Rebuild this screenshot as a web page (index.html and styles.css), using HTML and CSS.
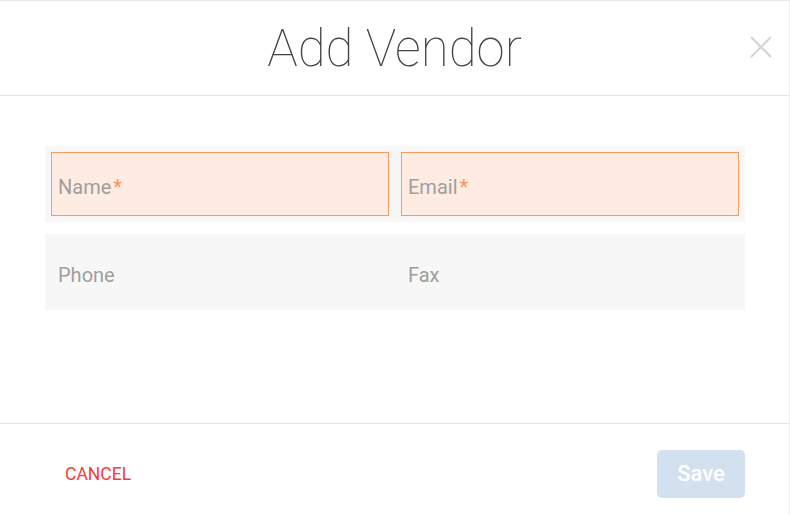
FILE: index.html
```html
<!DOCTYPE html>
<html lang="en">
<head>
  <meta charset="UTF-8">
  <meta name="viewport" content="width=device-width, initial-scale=1.0">
  <title>Add Vendor</title>
  <link rel="stylesheet" href="styles.css">
</head>
<body>
  <div class="modal">
    <!-- Header -->
    <div class="modal-header">
      <h1>Add Vendor</h1>
      <button class="close-btn" aria-label="Close">
        <svg width="22" height="22" viewBox="0 0 22 22">
          <path d="M1 1 L21 21 M21 1 L1 21" stroke="#d4d4d4" stroke-width="2" fill="none"/>
        </svg>
      </button>
    </div>

    <!-- Form -->
    <div class="modal-body">
      <div class="form-row">
        <div class="field required">
          <span class="label">Name<span class="star">*</span></span>
        </div>
        <div class="field required">
          <span class="label">Email<span class="star">*</span></span>
        </div>
      </div>
      <div class="form-row">
        <div class="field">
          <span class="label">Phone</span>
        </div>
        <div class="field">
          <span class="label">Fax</span>
        </div>
      </div>
    </div>

    <!-- Footer -->
    <div class="modal-footer">
      <button class="cancel-btn">CANCEL</button>
      <button class="save-btn" disabled>Save</button>
    </div>
  </div>
</body>
</html>
```

FILE: styles.css
```css
body {
  font-family: Roboto, 'Noto Sans', sans-serif;
  margin: 0;
  background: #fff;
}
.modal {
  width: 790px;
  height: 515px;
  box-sizing: border-box;
  border-top: 1px solid #e6e6e6;
  border-right: 1px solid #f0f0f0;
  display: flex;
  flex-direction: column;
}
.modal-header {
  position: relative;
  height: 94px;
  border-bottom: 1px solid #e2e2e2;
  display: flex;
  justify-content: center;
  align-items: center;
}
.modal-header h1 {
  margin: 0;
  font-size: 51px;
  font-weight: 100;
  color: #444;
}
.close-btn {
  position: absolute;
  right: 17px;
  top: 35px;
  background: none;
  border: none;
  padding: 0;
  cursor: pointer;
  line-height: 0;
}
.modal-body {
  flex: 1;
  padding: 50px 44px 0 45px;
  display: flex;
  flex-direction: column;
  gap: 12px;
}
.form-row {
  display: flex;
  height: 76px;
  background: #f7f7f7;
}
.field {
  flex: 1;
  display: flex;
  align-items: center;
  padding: 5px 7px 0;
  margin: 6px;
  font-size: 20px;
  color: #9e9e9e;
}
.required {
  background: #feece2;
  border: 1px solid #f89b5e;
  padding: 6px 6px 0;
}
.star {
  color: #f7935a;
  margin-left: 2px;
}
.modal-footer {
  height: 92px;
  box-sizing: border-box;
  border-top: 1px solid #e2e2e2;
  display: flex;
  justify-content: space-between;
  align-items: center;
  padding: 8px 44px 0 65px;
}
.cancel-btn {
  background: none;
  border: none;
  padding: 0;
  font-family: inherit;
  font-size: 17.5px;
  color: #f0403c;
  cursor: pointer;
}
.save-btn {
  width: 88px;
  height: 48px;
  border: none;
  border-radius: 5px;
  background: #d3e0ef;
  color: #fff;
  font-family: inherit;
  font-size: 22px;
  font-weight: 500;
}
```
